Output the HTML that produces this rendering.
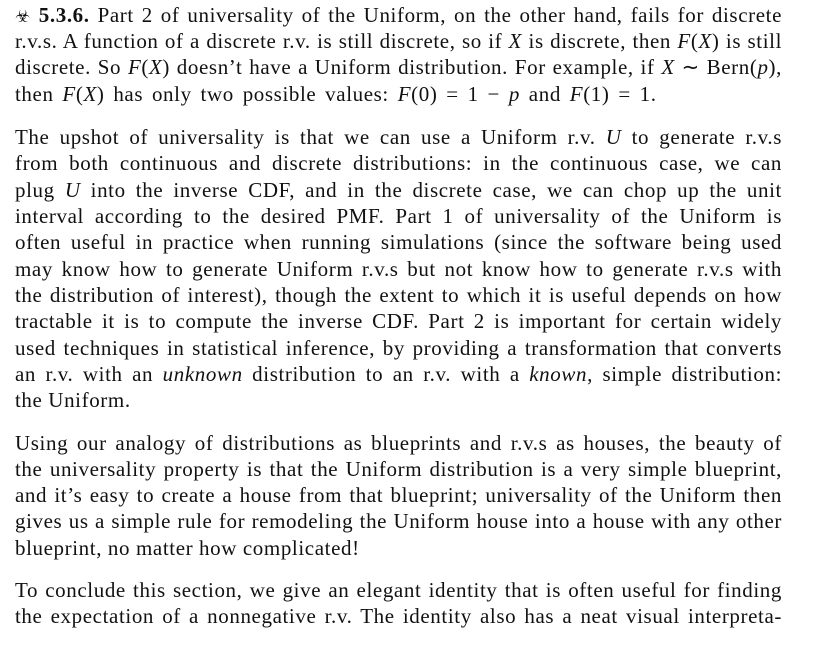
<!DOCTYPE html>
<html><head><meta charset="utf-8"><style>
body{margin:0;width:830px;height:646px;background:#fff;overflow:hidden;font-family:"Liberation Serif",serif;font-size:21px;letter-spacing:0.6px;color:#111;}
.l{position:absolute;left:15px;width:767px;height:26px;line-height:26px;white-space:nowrap;text-align:justify;text-align-last:justify;}
.e{text-align-last:left;}
i{font-style:italic}
.s{font-family:"DejaVu Sans",sans-serif;font-size:17px;}
.m{word-spacing:3px}
</style></head><body>
<div class="l" style="top:2px"><span class="s">☣</span> <b>5.3.6.</b> Part 2 of universality of the Uniform, on the other hand, fails for discrete</div>
<div class="l" style="top:28px">r.v.s. A function of a discrete r.v. is still discrete, so if <i>X</i> is discrete, then <i>F</i>(<i>X</i>) is still</div>
<div class="l" style="top:54px">discrete. So <i>F</i>(<i>X</i>) doesn’t have a Uniform distribution. For example, if <i>X</i> ∼ Bern(<i>p</i>),</div>
<div class="l e m" style="top:81px">then <i>F</i>(<i>X</i>) has only two possible values: <i>F</i>(0) = 1 − <i>p</i> and <i>F</i>(1) = 1.</div>

<div class="l" style="top:124px">The upshot of universality is that we can use a Uniform r.v. <i>U</i> to generate r.v.s</div>
<div class="l" style="top:150px">from both continuous and discrete distributions: in the continuous case, we can</div>
<div class="l" style="top:177px">plug <i>U</i> into the inverse CDF, and in the discrete case, we can chop up the unit</div>
<div class="l" style="top:203px">interval according to the desired PMF. Part 1 of universality of the Uniform is</div>
<div class="l" style="top:229px">often useful in practice when running simulations (since the software being used</div>
<div class="l" style="top:256px">may know how to generate Uniform r.v.s but not know how to generate r.v.s with</div>
<div class="l" style="top:282px">the distribution of interest), though the extent to which it is useful depends on how</div>
<div class="l" style="top:308px">tractable it is to compute the inverse CDF. Part 2 is important for certain widely</div>
<div class="l" style="top:335px">used techniques in statistical inference, by providing a transformation that converts</div>
<div class="l" style="top:361px">an r.v. with an <i>unknown</i> distribution to an r.v. with a <i>known</i>, simple distribution:</div>
<div class="l e" style="top:387px">the Uniform.</div>

<div class="l" style="top:430px">Using our analogy of distributions as blueprints and r.v.s as houses, the beauty of</div>
<div class="l" style="top:456px">the universality property is that the Uniform distribution is a very simple blueprint,</div>
<div class="l" style="top:482px">and it’s easy to create a house from that blueprint; universality of the Uniform then</div>
<div class="l" style="top:508px">gives us a simple rule for remodeling the Uniform house into a house with any other</div>
<div class="l e" style="top:535px">blueprint, no matter how complicated!</div>

<div class="l" style="top:577px">To conclude this section, we give an elegant identity that is often useful for finding</div>
<div class="l" style="top:603px">the expectation of a nonnegative r.v. The identity also has a neat visual interpreta-</div>
</body></html>
